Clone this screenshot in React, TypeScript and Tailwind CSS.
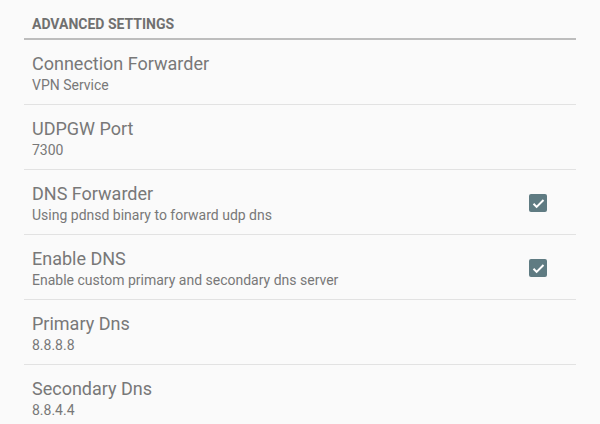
import React from "react";

type Pref = { title: string; summary: string; checked?: boolean };

const prefs: Pref[] = [
  { title: "Connection Forwarder", summary: "VPN Service" },
  { title: "UDPGW Port", summary: "7300" },
  { title: "DNS Forwarder", summary: "Using pdnsd binary to forward udp dns", checked: true },
  { title: "Enable DNS", summary: "Enable custom primary and secondary dns server", checked: true },
  { title: "Primary Dns", summary: "8.8.8.8" },
  { title: "Secondary Dns", summary: "8.8.4.4" },
];

const CheckBox = () => (
  <div className="w-[18px] h-[18px] rounded-[2px] bg-[#5f7b82] flex items-center justify-center">
    <svg width="15" height="15" viewBox="0 0 24 24" fill="none">
      <path d="M4 12.5l5 5L20 6.5" stroke="#ffffff" strokeWidth="3.2" />
    </svg>
  </div>
);

const App = () => {
  return (
    <div className="w-[600px] h-[424px] overflow-hidden bg-[#fafafa] px-6 font-['Roboto',sans-serif]">
      <div className="h-[40px] pl-2 pt-[16px] border-b-2 border-[#bdbdbd]">
        <p className="text-[14px] leading-4 font-bold text-[#707070]">ADVANCED SETTINGS</p>
      </div>
      {prefs.map((p) => (
        <div key={p.title} className="h-[65px] border-b border-[#e2e2e2] flex">
          <div className="flex-1 pl-2 pt-[13px]">
            <p className="text-[18px] leading-[22px] text-[#787878]">{p.title}</p>
            <p className="text-[14px] leading-[20px] text-[#787878]">{p.summary}</p>
          </div>
          {p.checked && (
            <div className="pr-[29px] pt-[24px]">
              <CheckBox />
            </div>
          )}
        </div>
      ))}
    </div>
  );
};

export default App;
